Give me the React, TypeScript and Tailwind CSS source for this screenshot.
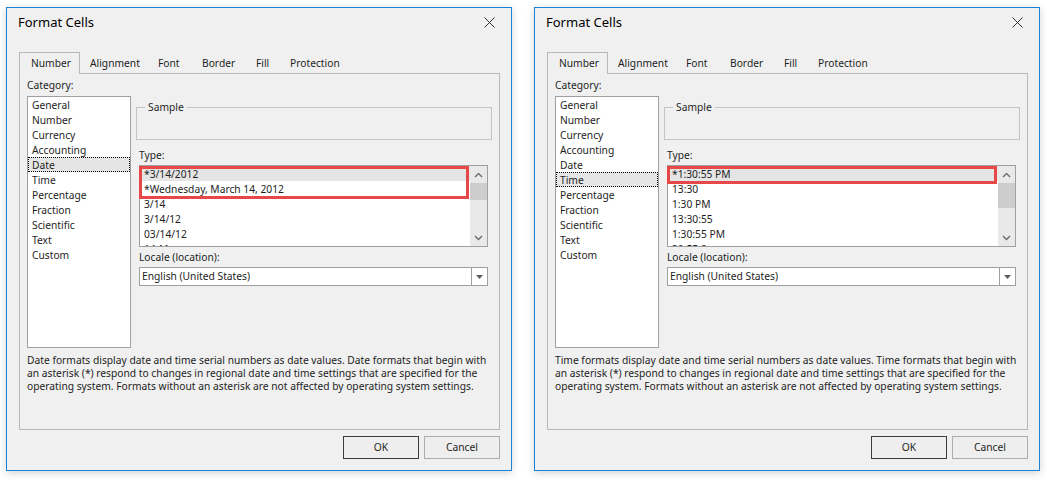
import React from "react";

const categories = [
    "General",
    "Number",
    "Currency",
    "Accounting",
    "Date",
    "Time",
    "Percentage",
    "Fraction",
    "Scientific",
    "Text",
    "Custom",
];

type DialogProps = {
    category: string;
    types: string[];
    markRows: number;
    thumbTop: number;
    thumbHeight: number;
    description: string[];
};

function Chevron({ up }: { up?: boolean }) {
    return (
        <svg width="9" height="6" viewBox="0 0 9 6">
            <path
                d={up ? "M1 5 L4.5 1.5 L8 5" : "M1 1 L4.5 4.5 L8 1"}
                stroke="#6b6b6b"
                strokeWidth="1.4"
                fill="none"
            />
        </svg>
    );
}

function FormatCells({ category, types, markRows, thumbTop, thumbHeight, description }: DialogProps) {
    return (
        <div className="w-[506px] h-[464px] border border-[#1883d7] bg-[#f0f0f0] flex flex-col shadow-[0_2px_8px_rgba(0,0,0,0.18)] text-[#1e1e1e] font-['Noto_Sans',sans-serif] text-[10.25px]">
            {/* title bar */}
            <div className="h-[44px] flex items-start justify-between pl-[11px] pr-[16px]">
                <div className="mt-[4px] text-[13px] leading-[20px] text-black">Format Cells</div>
                <svg className="mt-[9px]" width="11" height="11" viewBox="0 0 11 11">
                    <path d="M0.5 0.5 L10.5 10.5 M10.5 0.5 L0.5 10.5" stroke="#333" strokeWidth="1" />
                </svg>
            </div>

            {/* tabs */}
            <div className="ml-[12px] h-[21px] flex items-end leading-[20px]">
                <div className="relative z-10 w-[61px] h-[22px] -mb-px border border-b-0 border-[#b8b8b8] bg-[#f0f0f0] pl-[11px]">
                    Number
                </div>
                <div className="w-[68px] pl-[10px] h-[20px]">Alignment</div>
                <div className="w-[44px] pl-[10px] h-[20px]">Font</div>
                <div className="w-[54px] pl-[10px] h-[20px]">Border</div>
                <div className="w-[34px] pl-[10px] h-[20px]">Fill</div>
                <div className="w-[70px] pl-[10px] h-[20px]">Protection</div>
            </div>

            {/* panel */}
            <div className="ml-[12px] w-[481px] h-[357px] border border-[#b8b8b8] pl-[7px] pt-[4px]">
                <div className="leading-[15px]">Category:</div>
                <div className="mt-[3px] flex items-start">
                    <div className="w-[104px] h-[252px] border border-[#a0a0a0] bg-white">
                        {categories.map((c) => (
                            <div
                                key={c}
                                className={
                                    c === category
                                        ? "h-[15px] leading-[13px] pt-px pl-[3px] border border-dotted border-black bg-[#e5e5e5]"
                                        : "h-[15px] leading-[13px] pt-px pl-[3px] border border-transparent"
                                }
                            >
                                {c}
                            </div>
                        ))}
                    </div>

                    <div className="ml-[5px] w-[356px]">
                        <fieldset className="mt-[4px] h-[40px] border border-[#c4c4c4]">
                            <legend className="ml-[8px] px-[3px] leading-[15px]">Sample</legend>
                        </fieldset>

                        <div className="ml-[3px] mt-[8px] leading-[15px]">Type:</div>
                        <div className="relative ml-[3px] mt-[2px] w-[349px] h-[82px] border border-[#a0a0a0] bg-white flex">
                            <div className="flex-1 overflow-hidden">
                                {types.map((t, i) => (
                                    <div
                                        key={t}
                                        className={
                                            i === 0
                                                ? "h-[15px] leading-[14px] pt-px pl-[4px] bg-[#e5e5e5] whitespace-nowrap"
                                                : "h-[15px] leading-[14px] pt-px pl-[4px] whitespace-nowrap"
                                        }
                                    >
                                        {t}
                                    </div>
                                ))}
                            </div>
                            <div className="w-[17px] bg-[#e9e9e9] flex flex-col">
                                <div className="h-[17px] flex items-center justify-center">
                                    <Chevron up />
                                </div>
                                <div className="flex-1 relative">
                                    <div
                                        className="absolute left-0 right-0 bg-[#cdcdcd]"
                                        style={{ top: thumbTop, height: thumbHeight }}
                                    />
                                </div>
                                <div className="h-[17px] flex items-center justify-center">
                                    <Chevron />
                                </div>
                            </div>
                            <div
                                className="absolute left-[-1px] top-0 w-[330px] border-[3px] border-[#e8474a]"
                                style={{ height: markRows * 15 + 3 }}
                            />
                        </div>

                        <div className="ml-[3px] mt-[3px] leading-[15px]">Locale (location):</div>
                        <div className="ml-[3px] mt-[2px] w-[349px] h-[19px] border border-[#a0a0a0] bg-white flex">
                            <div className="flex-1 pl-[2px] leading-[17px]">English (United States)</div>
                            <div className="w-[16px] border-l border-[#a0a0a0] flex items-center justify-center">
                                <svg width="7" height="4" viewBox="0 0 7 4">
                                    <path d="M0 0 H7 L3.5 4 Z" fill="#606060" />
                                </svg>
                            </div>
                        </div>
                    </div>
                </div>

                <div className="mt-[6px] leading-[13px] whitespace-nowrap">
                    {description.map((line) => (
                        <div key={line}>{line}</div>
                    ))}
                </div>
            </div>

            {/* buttons */}
            <div className="mt-[6px] pr-[11px] flex justify-end gap-[5px]">
                <button className="w-[76px] h-[23px] border border-[#3c3c3c] bg-[#eeeeee] leading-[21px]">OK</button>
                <button className="w-[76px] h-[23px] border border-[#adadad] bg-[#eeeeee] leading-[21px]">Cancel</button>
            </div>
        </div>
    );
}

export default function App() {
    return (
        <div className="w-[1047px] h-[482px] bg-white flex items-start pl-[6px] pt-[7px] gap-[22px]">
            <FormatCells
                category="Date"
                types={["*3/14/2012", "*Wednesday, March 14, 2012", "3/14", "3/14/12", "03/14/12", "14-Mar"]}
                markRows={2}
                thumbTop={0}
                thumbHeight={17}
                description={[
                    "Date formats display date and time serial numbers as date values. Date formats that begin with",
                    "an asterisk (*) respond to changes in regional date and time settings that are specified for the",
                    "operating system. Formats without an asterisk are not affected by operating system settings.",
                ]}
            />
            <FormatCells
                category="Time"
                types={["*1:30:55 PM", "13:30", "1:30 PM", "13:30:55", "1:30:55 PM", "30:55.2"]}
                markRows={1}
                thumbTop={0}
                thumbHeight={25}
                description={[
                    "Time formats display date and time serial numbers as date values. Time formats that begin with",
                    "an asterisk (*) respond to changes in regional date and time settings that are specified for the",
                    "operating system. Formats without an asterisk are not affected by operating system settings.",
                ]}
            />
        </div>
    );
}
